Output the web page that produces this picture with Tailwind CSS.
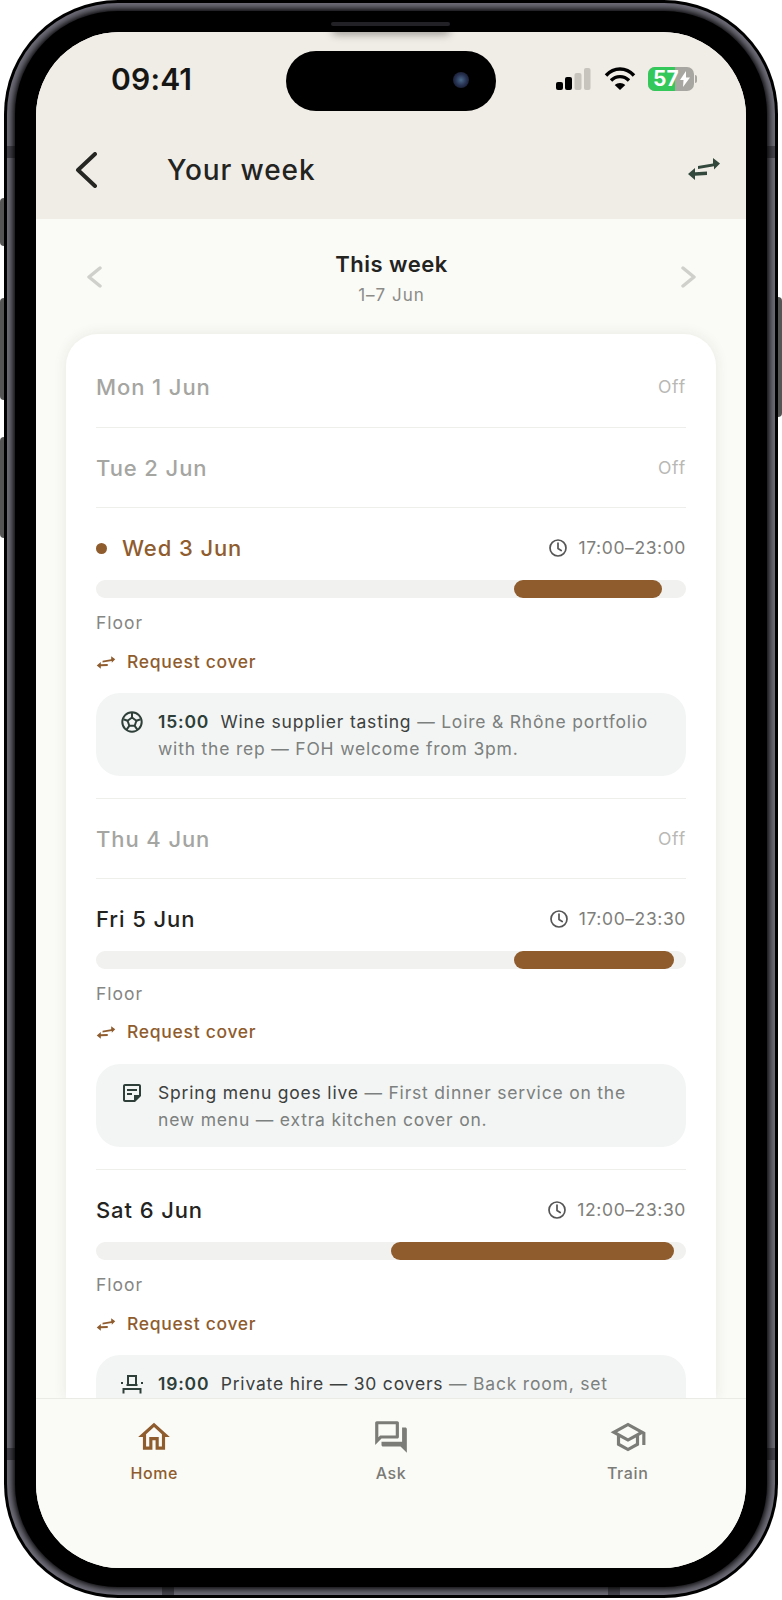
<!DOCTYPE html>
<html lang="en">
<head>
  <meta charset="UTF-8" />
  <title>Your week</title>
  <script src="https://cdn.jsdelivr.net/npm/@tailwindcss/browser@4"></script>
</head>
<body class="bg-white font-['Inter','Liberation_Sans',sans-serif]">

<div class="relative w-[782px] h-[1600px] overflow-hidden bg-white">
  <!-- side buttons -->
  <div class="absolute left-0 top-[198px] w-[5px] h-[48px] rounded-l bg-[#555]"></div>
  <div class="absolute left-0 top-[298px] w-[5px] h-[102px] rounded-l bg-[#555]"></div>
  <div class="absolute left-0 top-[437px] w-[5px] h-[101px] rounded-l bg-[#555]"></div>
  <div class="absolute right-0 top-[297px] w-[5px] h-[120px] rounded-r bg-[#555]"></div>

  <!-- phone frame -->
  <div class="absolute left-[4px] top-0 w-[774px] h-[1598px] rounded-[114px] bg-black p-[3px]">
    <div class="relative w-full h-full rounded-[111px] bg-[#6e6d78] p-[8px] overflow-hidden">
      <div class="absolute left-0 top-[143px] w-full h-[12px] bg-[#45444d]"></div>
      <div class="absolute left-0 top-[1445px] w-full h-[12px] bg-[#45444d]"></div>
      <div class="absolute left-[155px] bottom-0 w-[12px] h-[30px] bg-[#45444d]"></div>
      <div class="absolute right-[155px] bottom-0 w-[12px] h-[30px] bg-[#45444d]"></div>
      <div class="relative w-full h-full rounded-[103px] bg-black pt-[21px] px-[21px] pb-[19px] shadow-[0_0_6px_2px_#000]">

        <!-- screen -->
        <div class="relative w-full h-full rounded-[84px] overflow-hidden bg-[#fafaf6] flex flex-col">

          <header class="h-[187px] shrink-0 bg-[#f0ece6] text-[#23231f]">
            <div class="flex items-center justify-between h-[32px] mt-[31px] pl-[75px] pr-[49px]">
              <span class="text-[30px] leading-[32px] font-semibold tracking-[0.2px] text-[#161614]">09:41</span>
              <div class="flex items-center">
                <svg width="36" height="24" viewBox="0 0 36 24" class="mr-[13px]">
                  <rect x="1" y="15" width="7" height="8" rx="2" fill="#000"/>
                  <rect x="10" y="10" width="7" height="13" rx="2" fill="#000"/>
                  <rect x="19.5" y="6" width="7" height="17" rx="2" fill="#c6c4bd"/>
                  <rect x="29" y="1" width="6.500" height="22" rx="2" fill="#c6c4bd"/>
                </svg>
                <svg width="32" height="24" viewBox="0 0 32 24" class="mr-[12px]" fill="none" stroke="#000" stroke-width="3.400">
                  <path d="M2 8.500C10-.2 22-.2 30 8.500"/>
                  <path d="M7 13.500c5.200-5.200 12.800-5.200 18 0"/>
                  <path d="M16 23l-5.300-5c3-2.700 7.600-2.700 10.600 0z" fill="#000" stroke="none"/>
                </svg>
                <div class="relative flex items-center w-[46px] h-[24px] rounded-[7px] overflow-hidden bg-[#a8a6a0]">
                  <div class="w-[27px] h-full bg-[#34c759]"></div>
                  <span class="absolute left-[5px] top-0 text-[21px] leading-[24px] font-bold text-white">57</span>
                  <svg width="10" height="16" viewBox="0 0 10 16" class="absolute left-[32px] top-[4px]"><path d="M6 0 0 9h3.500L3 16l7-9.500H6z" fill="#fff"/></svg>
                </div>
                <div class="w-[2px] h-[8px] ml-[1px] rounded-r bg-[#a8a6a0]"></div>
              </div>
            </div>
            <div class="flex items-center h-[40px] mt-[55px] pl-[38px] pr-[25px]">
              <svg width="24" height="36" viewBox="0 0 24 36" fill="none" stroke="#262622" stroke-width="4" stroke-linecap="round" stroke-linejoin="round">
                <path d="M21 2 4 18l17 16"/>
              </svg>
              <h1 class="ml-[69px] text-[28px] leading-[40px] font-medium tracking-[0.9px]">Your week</h1>
              <svg width="34" height="26" viewBox="0 0 34 26" class="ml-auto -mt-[3px]" fill="#33483d">
                <path d="M11 10 26 7.500V2l7 5.500-6 6v-3.200L11 13z"/>
                <path d="M20 15.500 8 16.200V12l-7 6 7 6v-4.300l12-.7z"/>
              </svg>
            </div>
          </header>

          <main class="relative flex-1 min-h-0 overflow-hidden">
            <div class="flex items-center justify-between h-[57px] mt-[30px] mb-[28px] pl-[50px] pr-[49px]">
              <svg width="16" height="24" viewBox="0 0 16 24" fill="none" stroke="#cfcfcb" stroke-width="3.400" stroke-linecap="round" stroke-linejoin="round" class="-mt-[1px]"><path d="M14 3 3 12l11 9"/></svg>
              <div class="text-center">
                <div class="text-[22px] leading-[30px] font-semibold tracking-[0.5px] text-[#23231f]">This week</div>
                <div class="mt-[5px] text-[17px] leading-[22px] tracking-[1px] text-[#8b8b88]">1–7 Jun</div>
              </div>
              <svg width="16" height="24" viewBox="0 0 16 24" fill="none" stroke="#cfcfcb" stroke-width="3.400" stroke-linecap="round" stroke-linejoin="round" class="-mt-[1px]"><path d="m2 3 11 9-11 9"/></svg>
            </div>

            <section class="mx-[30px] rounded-t-[32px] bg-white px-[30px] pt-[13px] shadow-[0_0_14px_rgba(60,55,40,0.09)]">

              <div class="flex items-center justify-between pt-[26px] pb-[26px] border-b border-[#eeeeeb]">
                <span class="text-[22px] leading-[28px] font-medium tracking-[0.9px] text-[#a5a5a2]">Mon 1 Jun</span>
                <span class="text-[17.5px] leading-[28px] tracking-[0.8px] text-[#b8b8b5]">Off</span>
              </div>
              <div class="flex items-center justify-between pt-[26px] pb-[25px] border-b border-[#eeeeeb]">
                <span class="text-[22px] leading-[28px] font-medium tracking-[0.9px] text-[#a5a5a2]">Tue 2 Jun</span>
                <span class="text-[17.5px] leading-[28px] tracking-[0.8px] text-[#b8b8b5]">Off</span>
              </div>

              <!-- Wed -->
              <div class="pt-[26px] pb-[22px] border-b border-[#eeeeeb]">
                <div class="flex items-center justify-between">
                  <div class="flex items-center">
                    <span class="w-[11px] h-[11px] rounded-full bg-[#8f5c2e]"></span>
                    <span class="ml-[15px] text-[22px] leading-[28px] font-medium tracking-[0.9px] text-[#8f5c2e]">Wed 3 Jun</span>
                  </div>
                  <div class="flex items-center text-[17.5px] leading-[28px] tracking-[0.6px] text-[#7e7e7b]">
                    <svg width="20" height="20" viewBox="0 0 20 20" fill="none" stroke="#555" stroke-width="1.700" stroke-linecap="round" stroke-linejoin="round" class="mr-[10px]"><circle cx="10" cy="10" r="8"/><path d="M10 5v5.500l3.200 2"/></svg>
                    17:00–23:00
                  </div>
                </div>
                <div class="flex h-[18px] mt-[18px] rounded-full bg-[#f1f1ef]"><div class="ml-[418px] w-[148px] rounded-full bg-[#8f5c2e]"></div></div>
                <div class="mt-[13px] text-[17.5px] leading-[24px] tracking-[1px] text-[#868683]">Floor</div>
                <div class="flex items-center mt-[15px] text-[17.5px] leading-[24px] font-medium tracking-[0.7px] text-[#8f5c2e]">
                  <svg width="20" height="15" viewBox="0 0 34 26" fill="#8f5c2e" class="mr-[11px]"><path d="M11 10 26 7.500V2l7 5.500-6 6v-3.200L11 13z"/><path d="M20 15.500 8 16.200V12l-7 6 7 6v-4.300l12-.7z"/></svg>
                  Request cover
                </div>
                <div class="flex mt-[19px] rounded-[24px] bg-[#f3f5f4] pl-[24px] pt-[15px] pb-[14px]">
                  <svg width="24" height="24" viewBox="0 0 24 24" fill="none" stroke="#2d3f38" stroke-width="2" stroke-linejoin="round" class="shrink-0 mt-[2px]">
                    <circle cx="12" cy="12" r="9.700"/>
                    <path d="m12 7.500 4.400 3.200-1.700 5.100H9.300l-1.700-5.100z"/>
                    <path d="M12 7.500V3M16.400 10.700l4.200-1.500M14.700 15.800l2.700 3.800M9.300 15.800l-2.700 3.800M7.600 10.700 3.400 9.200"/>
                  </svg>
                  <p class="ml-[14px] text-[17.5px] leading-[27px] tracking-[0.8px] text-[#7c807e] whitespace-nowrap"><b class="font-semibold text-[#2d3f38]">15:00</b>&nbsp; <span class="text-[#3c403e]">Wine supplier tasting</span> — Loire &amp; Rhône portfolio<br>with the rep — FOH welcome from 3pm.</p>
                </div>
              </div>

              <div class="flex items-center justify-between pt-[26px] pb-[25px] border-b border-[#eeeeeb]">
                <span class="text-[22px] leading-[28px] font-medium tracking-[0.9px] text-[#a5a5a2]">Thu 4 Jun</span>
                <span class="text-[17.5px] leading-[28px] tracking-[0.8px] text-[#b8b8b5]">Off</span>
              </div>

              <!-- Fri -->
              <div class="pt-[26px] pb-[22px] border-b border-[#eeeeeb]">
                <div class="flex items-center justify-between">
                  <span class="text-[22px] leading-[28px] font-medium tracking-[0.9px] text-[#23231f]">Fri 5 Jun</span>
                  <div class="flex items-center text-[17.5px] leading-[28px] tracking-[0.6px] text-[#7e7e7b]">
                    <svg width="20" height="20" viewBox="0 0 20 20" fill="none" stroke="#555" stroke-width="1.700" stroke-linecap="round" stroke-linejoin="round" class="mr-[10px]"><circle cx="10" cy="10" r="8"/><path d="M10 5v5.500l3.200 2"/></svg>
                    17:00–23:30
                  </div>
                </div>
                <div class="flex h-[18px] mt-[18px] rounded-full bg-[#f1f1ef]"><div class="ml-[418px] w-[160px] rounded-full bg-[#8f5c2e]"></div></div>
                <div class="mt-[13px] text-[17.5px] leading-[24px] tracking-[1px] text-[#868683]">Floor</div>
                <div class="flex items-center mt-[14px] text-[17.5px] leading-[24px] font-medium tracking-[0.7px] text-[#8f5c2e]">
                  <svg width="20" height="15" viewBox="0 0 34 26" fill="#8f5c2e" class="mr-[11px]"><path d="M11 10 26 7.500V2l7 5.500-6 6v-3.200L11 13z"/><path d="M20 15.500 8 16.200V12l-7 6 7 6v-4.300l12-.7z"/></svg>
                  Request cover
                </div>
                <div class="flex mt-[20px] rounded-[24px] bg-[#f3f5f4] pl-[24px] pt-[15px] pb-[14px]">
                  <svg width="24" height="24" viewBox="0 0 24 24" fill="#2d3f38" class="shrink-0 mt-[2px]"><path d="M19 5v9h-5v5H5V5h14m0-2H5c-1.100 0-2 .9-2 2v14c0 1.100.9 2 2 2h10l6-6V5c0-1.100-.9-2-2-2zm-7 11H7v-2h5v2zm5-4H7V8h10v2z"/></svg>
                  <p class="ml-[14px] text-[17.5px] leading-[27px] tracking-[0.8px] text-[#7c807e] whitespace-nowrap"><span class="text-[#3c403e]">Spring menu goes live</span> — First dinner service on the<br>new menu — extra kitchen cover on.</p>
                </div>
              </div>

              <!-- Sat -->
              <div class="pt-[26px]">
                <div class="flex items-center justify-between">
                  <span class="text-[22px] leading-[28px] font-medium tracking-[0.9px] text-[#23231f]">Sat 6 Jun</span>
                  <div class="flex items-center text-[17.5px] leading-[28px] tracking-[0.6px] text-[#7e7e7b]">
                    <svg width="20" height="20" viewBox="0 0 20 20" fill="none" stroke="#555" stroke-width="1.700" stroke-linecap="round" stroke-linejoin="round" class="mr-[10px]"><circle cx="10" cy="10" r="8"/><path d="M10 5v5.500l3.200 2"/></svg>
                    12:00–23:30
                  </div>
                </div>
                <div class="flex h-[18px] mt-[18px] rounded-full bg-[#f1f1ef]"><div class="ml-[295px] w-[283px] rounded-full bg-[#8f5c2e]"></div></div>
                <div class="mt-[13px] text-[17.5px] leading-[24px] tracking-[1px] text-[#868683]">Floor</div>
                <div class="flex items-center mt-[15px] text-[17.5px] leading-[24px] font-medium tracking-[0.7px] text-[#8f5c2e]">
                  <svg width="20" height="15" viewBox="0 0 34 26" fill="#8f5c2e" class="mr-[11px]"><path d="M11 10 26 7.500V2l7 5.500-6 6v-3.200L11 13z"/><path d="M20 15.500 8 16.200V12l-7 6 7 6v-4.300l12-.7z"/></svg>
                  Request cover
                </div>
                <div class="flex mt-[19px] rounded-t-[24px] bg-[#f3f5f4] pl-[24px] pt-[15px] h-[44px] overflow-hidden">
                  <svg width="24" height="24" viewBox="0 0 24 24" fill="none" stroke="#2d3f38" stroke-width="2" class="shrink-0 mt-[2px]">
                    <path d="M8 12.500V4h8v8.500M6.500 13h11M3.500 21.500V17h17v4.500"/>
                    <path d="M1 11h2M21 11h2"/>
                  </svg>
                  <p class="ml-[14px] text-[17.5px] leading-[27px] tracking-[0.8px] text-[#7c807e] whitespace-nowrap"><b class="font-semibold text-[#2d3f38]">19:00</b>&nbsp; <span class="text-[#3c403e]">Private hire — 30 covers</span> — Back room, set</p>
                </div>
              </div>
            </section>
          </main>

          <nav class="h-[170px] shrink-0 border-t border-[#ebebe6] bg-[#fafaf6] grid grid-cols-3 pt-[19px] text-[16px] leading-[24px] tracking-[0.6px] font-medium text-[#7b7b77]">
            <div class="flex flex-col items-center text-[#8f5c2e]">
              <svg width="38" height="38" viewBox="0 0 24 24" fill="#8f5c2e"><path d="M12 5.690l5 4.500V18h-2v-6H9v6H7v-7.810l5-4.500M12 3 2 12h3v8h6v-6h2v6h6v-8h3L12 3z"/></svg>
              <span class="mt-[5px]">Home</span>
            </div>
            <div class="flex flex-col items-center">
              <svg width="38" height="38" viewBox="0 0 24 24" fill="#7b7b77"><path d="M15 4v7H5.170L4 12.170V4h11m1-2H3c-.55 0-1 .45-1 1v14l4-4h10c.55 0 1-.45 1-1V3c0-.55-.45-1-1-1zm5 4h-2v9H6v2c0 .55.45 1 1 1h11l4 4V7c0-.55-.45-1-1-1z"/></svg>
              <span class="mt-[5px]">Ask</span>
            </div>
            <div class="flex flex-col items-center">
              <svg width="38" height="38" viewBox="0 0 24 24" fill="#7b7b77"><path d="M12 3 1 9l4 2.180v6L12 21l7-3.820v-6l2-1.090V17h2V9L12 3zm6.820 6L12 12.720 5.180 9 12 5.280 18.820 9zM17 15.990l-5 2.730-5-2.730v-3.720L12 15l5-2.730v3.720z"/></svg>
              <span class="mt-[5px]">Train</span>
            </div>
          </nav>

          <!-- speaker shadow -->
          <div class="absolute left-[296px] -top-[6px] w-[118px] h-[8px] rounded-full bg-black/40 blur-[4px]"></div>
          <!-- dynamic island -->
          <div class="absolute left-[250px] top-[19px] w-[210px] h-[60px] rounded-full bg-black">
            <div class="absolute left-[167px] top-[21px] w-[16px] h-[16px] rounded-full bg-[radial-gradient(circle,#4a6a8a_0%,#26304f_50%,#0c0f18_100%)]"></div>
          </div>
        </div>
      </div>
      <!-- speaker grille -->
      <div class="absolute left-[324px] top-[19px] w-[119px] h-[4px] rounded-full bg-[#222226]"></div>
    </div>
  </div>
</div>

</body>
</html>
